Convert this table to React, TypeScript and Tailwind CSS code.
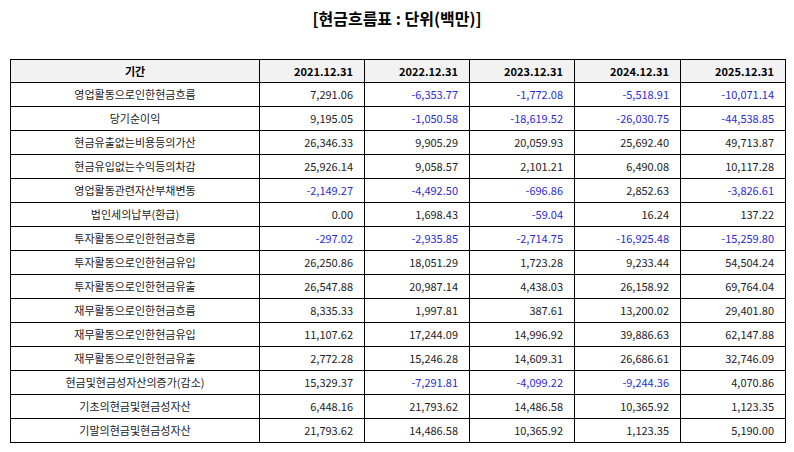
import * as React from "react"

const years = ["2021.12.31", "2022.12.31", "2023.12.31", "2024.12.31", "2025.12.31"]

const rows: [string, string[]][] = [
  ["영업활동으로인한현금흐름", ["7,291.06", "-6,353.77", "-1,772.08", "-5,518.91", "-10,071.14"]],
  ["당기순이익", ["9,195.05", "-1,050.58", "-18,619.52", "-26,030.75", "-44,538.85"]],
  ["현금유출없는비용등의가산", ["26,346.33", "9,905.29", "20,059.93", "25,692.40", "49,713.87"]],
  ["현금유입없는수익등의차감", ["25,926.14", "9,058.57", "2,101.21", "6,490.08", "10,117.28"]],
  ["영업활동관련자산부채변동", ["-2,149.27", "-4,492.50", "-696.86", "2,852.63", "-3,826.61"]],
  ["법인세의납부(환급)", ["0.00", "1,698.43", "-59.04", "16.24", "137.22"]],
  ["투자활동으로인한현금흐름", ["-297.02", "-2,935.85", "-2,714.75", "-16,925.48", "-15,259.80"]],
  ["투자활동으로인한현금유입", ["26,250.86", "18,051.29", "1,723.28", "9,233.44", "54,504.24"]],
  ["투자활동으로인한현금유출", ["26,547.88", "20,987.14", "4,438.03", "26,158.92", "69,764.04"]],
  ["재무활동으로인한현금흐름", ["8,335.33", "1,997.81", "387.61", "13,200.02", "29,401.80"]],
  ["재무활동으로인한현금유입", ["11,107.62", "17,244.09", "14,996.92", "39,886.63", "62,147.88"]],
  ["재무활동으로인한현금유출", ["2,772.28", "15,246.28", "14,609.31", "26,686.61", "32,746.09"]],
  ["현금및현금성자산의증가(감소)", ["15,329.37", "-7,291.81", "-4,099.22", "-9,244.36", "4,070.86"]],
  ["기초의현금및현금성자산", ["6,448.16", "21,793.62", "14,486.58", "10,365.92", "1,123.35"]],
  ["기말의현금및현금성자산", ["21,793.62", "14,486.58", "10,365.92", "1,123.35", "5,190.00"]],
]

export default function App() {
  return (
    <div className="w-[794px] h-[452px] bg-white font-['Noto_Sans_CJK_KR','Noto_Sans',sans-serif] text-[#222]">
      <h1 className="pt-[7px] h-[59px] text-center text-[16px] font-bold text-black leading-[22px]">
        [현금흐름표 : 단위(백만)]
      </h1>
      <div className="px-[10px]">
        <table className="w-[775px] border-collapse table-fixed text-[11px] leading-none">
          <colgroup>
            <col className="w-[249px]" />
            <col className="w-[105px]" />
            <col className="w-[105px]" />
            <col className="w-[105px]" />
            <col className="w-[106px]" />
            <col className="w-[105px]" />
          </colgroup>
          <thead>
            <tr className="h-[23px] bg-[#f2f2f2] font-bold text-black">
              <th className="border border-black text-center">기간</th>
              {years.map((y) => (
                <th key={y} className="border border-black text-right pr-[11px]">{y}</th>
              ))}
            </tr>
          </thead>
          <tbody>
            {rows.map(([label, vals]) => (
              <tr key={label} className="h-[24px]">
                <td className="border border-black text-center">{label}</td>
                {vals.map((v, i) => (
                  <td
                    key={i}
                    className={
                      v.startsWith("-")
                        ? "border border-black text-right pr-[11px] text-[#2b2bd0]"
                        : "border border-black text-right pr-[11px]"
                    }
                  >
                    {v}
                  </td>
                ))}
              </tr>
            ))}
          </tbody>
        </table>
      </div>
    </div>
  )
}
